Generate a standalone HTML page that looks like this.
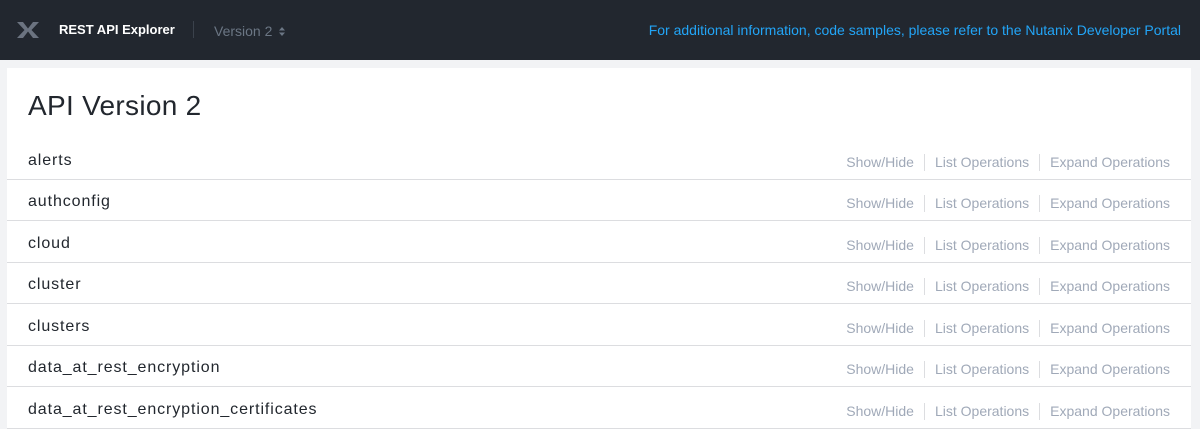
<!DOCTYPE html>
<html><head><style>
body{margin:0;width:1200px;height:412px;overflow:hidden;background:#f2f3f5;font-family:"Liberation Sans",sans-serif;}
.hdr{position:absolute;left:0;top:0;width:1200px;height:60px;background:#22272f;}
.logo{position:absolute;left:17px;top:22px;}
.title{position:absolute;left:59px;top:22px;color:#fff;font-size:13px;font-weight:bold;}
.sep{position:absolute;left:193px;top:21px;width:1px;height:17px;background:#3b424c;}
.ver{position:absolute;left:214px;top:23px;color:#6b7684;font-size:14px;}
.portal{position:absolute;right:19px;top:22px;color:#22a5f7;font-size:14px;}
.card{position:absolute;left:7px;top:68px;width:1184px;height:360px;background:#fff;}
h1{position:absolute;left:21px;top:22px;margin:0;font-weight:normal;font-size:28px;color:#22272e;letter-spacing:0.3px;}
.row{position:absolute;left:0;width:1184px;height:41px;border-bottom:1px solid #dcdde0;}
.row .n{position:absolute;left:21px;top:14px;font-size:16px;letter-spacing:0.9px;color:#22272e;}
.ops{position:absolute;right:21px;top:16px;font-size:14px;color:#a0a9b8;display:flex;}
.ops span{padding:0 10px;border-left:1px solid #dcdde0;line-height:17px;}
.ops span:first-child{border:none;}
.ops span:last-child{padding-right:0;}
</style></head><body>
<div class="hdr">
<svg class="logo" width="22" height="16" viewBox="0 0 22 16"><path d="M0 0h6l5 6.5L16 0h6l-7.5 8L22 16h-6l-5-6.5L6 16H0l7.5-8z" fill="#6b7380"/></svg>
<div class="title">REST API Explorer</div>
<div class="sep"></div>
<div class="ver">Version 2 <svg width="6" height="9" viewBox="0 0 6 9" style="margin-left:3px"><path d="M0 3.5L3 0l3 3.5zM0 5.5L3 9l3-3.5z" fill="#6b7684"/></svg></div>
<div class="portal">For additional information, code samples, please refer to the Nutanix Developer Portal</div>
</div>
<div class="card">
<h1>API Version 2</h1>
<div class="row" style="top:70px"><div class="n">alerts</div><div class="ops"><span>Show/Hide</span><span>List Operations</span><span>Expand Operations</span></div></div>
<div class="row" style="top:111px"><div class="n">authconfig</div><div class="ops"><span>Show/Hide</span><span>List Operations</span><span>Expand Operations</span></div></div>
<div class="row" style="top:153px"><div class="n">cloud</div><div class="ops"><span>Show/Hide</span><span>List Operations</span><span>Expand Operations</span></div></div>
<div class="row" style="top:194px"><div class="n">cluster</div><div class="ops"><span>Show/Hide</span><span>List Operations</span><span>Expand Operations</span></div></div>
<div class="row" style="top:236px"><div class="n">clusters</div><div class="ops"><span>Show/Hide</span><span>List Operations</span><span>Expand Operations</span></div></div>
<div class="row" style="top:277px"><div class="n">data_at_rest_encryption</div><div class="ops"><span>Show/Hide</span><span>List Operations</span><span>Expand Operations</span></div></div>
<div class="row" style="top:319px"><div class="n">data_at_rest_encryption_certificates</div><div class="ops"><span>Show/Hide</span><span>List Operations</span><span>Expand Operations</span></div></div>
</div>
</body></html>
